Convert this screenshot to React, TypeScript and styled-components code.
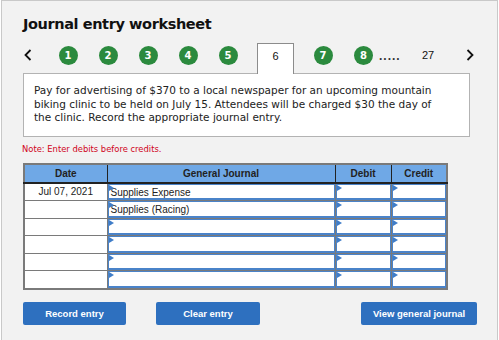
import styled, { createGlobalStyle } from "styled-components";

const GlobalStyle = createGlobalStyle`
  html, body {
    margin: 0;
    padding: 0;
    background: #ffffff;
  }
  body {
    font-family: "DejaVu Sans", Verdana, sans-serif;
  }
`;

const Frame = styled.div`
  margin-left: 1px;
  width: 497px;
  height: 340px;
  box-sizing: border-box;
  background: #f2f2f2;
  border: 1px solid #c9c9c9;
  border-bottom: none;
  padding: 12px 20px 0 21px;
`;

const Title = styled.h1`
  margin: 0;
  font-family: "DejaVu Sans", Verdana, sans-serif;
  font-size: 14.5px;
  font-weight: bold;
  letter-spacing: -0.4px;
  line-height: 22px;
  color: #111;
`;

const NavRow = styled.div`
  display: flex;
  align-items: center;
  height: 30px;
  margin-top: 8px;
  margin-left: -15px;
  padding-bottom: 6px;
  box-sizing: border-box;
`;

const Slot = styled.div<{ $w?: number; $end?: boolean }>`
  flex: 0 0 auto;
  width: ${(p) => p.$w ?? 40}px;
  display: flex;
  justify-content: ${(p) => (p.$end ? "flex-end" : "center")};
  align-items: center;
`;

const Chevron = styled.svg`
  display: block;
  width: 8px;
  height: 12px;
`;

const Step = styled.span`
  width: 19px;
  height: 19px;
  border-radius: 50%;
  background: #2b8a3e;
  color: #fff;
  font-family: "DejaVu Sans", Verdana, sans-serif;
  font-size: 10px;
  font-weight: bold;
  display: flex;
  align-items: center;
  justify-content: center;
`;

const Tab = styled.div`
  flex: 0 0 auto;
  align-self: stretch;
  margin: 0 9px -7px 9px;
  width: 37px;
  box-sizing: border-box;
  background: #fff;
  border: 1px solid #8c8c8c;
  border-bottom: none;
  position: relative;
  z-index: 1;
  display: flex;
  align-items: center;
  justify-content: center;
  padding-bottom: 6px;
  font-family: "Liberation Sans", Arial, sans-serif;
  font-size: 11px;
  color: #111;
`;

const Dots = styled.span`
  flex: 0 0 auto;
  width: 25px;
  font-family: "Liberation Sans", Arial, sans-serif;
  font-size: 12px;
  font-weight: bold;
  letter-spacing: 1px;
  color: #333;
  margin-left: 6px;
  line-height: 1;
  padding-top: 2px;
`;

const PageNum = styled.span`
  font-family: "Liberation Sans", Arial, sans-serif;
  font-size: 11px;
  color: #111;
`;

const Prompt = styled.div`
  width: 447px;
  box-sizing: border-box;
  background: #fff;
  border: 1px solid #b3b3b3;
  padding: 10px 10px 11px 10px;
  font-family: "DejaVu Sans", Verdana, sans-serif;
  font-size: 10.5px;
  line-height: 13.5px;
  color: #222;
`;

const Note = styled.div`
  margin-top: 6px;
  font-family: "DejaVu Sans", Verdana, sans-serif;
  font-size: 8.4px;
  line-height: 12px;
  color: #d0021b;
  margin-left: -1px;
`;

const Table = styled.table`
  margin-top: 8px;
  border-collapse: collapse;
  border: 2px solid #7a7a7a;
  table-layout: fixed;
  width: 423px;
  font-family: "Liberation Sans", Arial, sans-serif;
  font-size: 10px;
`;

const Th = styled.th`
  height: 17px;
  padding: 0;
  background: #6fa8e6;
  color: #222;
  font-weight: bold;
  border-left: 1px solid #222;
  border-bottom: 2px solid #222;
  &:first-child {
    border-left: none;
  }
`;

const DateCell = styled.td`
  padding: 0;
  background: #fff;
  border: 1px solid #7a7a7a;
  text-align: center;
  color: #222;
`;

const InputCell = styled.td`
  padding: 0;
  border: 1px solid #7a7a7a;
  background: #7a7a7a;
`;

const Field = styled.div`
  position: relative;
  height: 16.5px;
  box-sizing: border-box;
  background: #fff;
  border: 1.5px solid #4a83c9;
  border-top-width: 1px;
  border-bottom-width: 2px;
  padding: 1px 0 0 2px;
  color: #222;
  line-height: 13px;
  &::before {
    content: "";
    position: absolute;
    left: 0;
    top: 0;
    border-top: 3px solid transparent;
    border-bottom: 3px solid transparent;
    border-left: 5px solid #3f7dc8;
  }
`;

const Buttons = styled.div`
  display: flex;
  margin-top: 12px;
`;

const Button = styled.button<{ $w: number; $ml?: string }>`
  flex: 0 0 auto;
  width: ${(p) => p.$w}px;
  height: 23px;
  margin-left: ${(p) => p.$ml ?? "0"};
  border: none;
  border-radius: 2px;
  background: #2e70bf;
  color: #fff;
  font-family: "Liberation Sans", Arial, sans-serif;
  font-size: 9.5px;
  font-weight: bold;
  padding: 0;
`;

const rows = [
  { date: "Jul 07, 2021", account: "Supplies Expense" },
  { date: "", account: "Supplies (Racing)" },
  { date: "", account: "" },
  { date: "", account: "" },
  { date: "", account: "" },
  { date: "", account: "" },
];

const ChevronIcon = ({ dir }: { dir: "left" | "right" }) => (
  <Chevron viewBox="0 0 8 12">
    <polyline
      points={dir === "left" ? "6.5,1 1.5,6 6.5,11" : "1.5,1 6.5,6 1.5,11"}
      fill="none"
      stroke="#111"
      strokeWidth="1.8"
    />
  </Chevron>
);

export default function App() {
  return (
    <>
      <GlobalStyle />
      <Frame>
        <Title>Journal entry worksheet</Title>
        <NavRow>
          <Slot>
            <ChevronIcon dir="left" />
          </Slot>
          {[1, 2, 3, 4, 5].map((n) => (
            <Slot key={n}>
              <Step>{n}</Step>
            </Slot>
          ))}
          <Tab>6</Tab>
          <Slot>
            <Step>7</Step>
          </Slot>
          <Slot $w={30} $end>
            <Step>8</Step>
          </Slot>
          <Dots>.....</Dots>
          <Slot $w={48}>
            <PageNum>27</PageNum>
          </Slot>
          <Slot $w={36}>
            <ChevronIcon dir="right" />
          </Slot>
        </NavRow>
        <Prompt>
          Pay for advertising of $370 to a local newspaper for an upcoming mountain
          <br />
          biking clinic to be held on July 15. Attendees will be charged $30 the day of
          <br />
          the clinic. Record the appropriate journal entry.
        </Prompt>
        <Note>Note: Enter debits before credits.</Note>
        <Table>
          <colgroup>
            <col style={{ width: 83 }} />
            <col style={{ width: 228 }} />
            <col style={{ width: 56 }} />
            <col style={{ width: 56 }} />
          </colgroup>
          <thead>
            <tr>
              <Th>Date</Th>
              <Th>General Journal</Th>
              <Th>Debit</Th>
              <Th>Credit</Th>
            </tr>
          </thead>
          <tbody>
            {rows.map((r, i) => (
              <tr key={i}>
                <DateCell>{r.date}</DateCell>
                <InputCell>
                  <Field>{r.account}</Field>
                </InputCell>
                <InputCell>
                  <Field />
                </InputCell>
                <InputCell>
                  <Field />
                </InputCell>
              </tr>
            ))}
          </tbody>
        </Table>
        <Buttons>
          <Button $w={103}>Record entry</Button>
          <Button $w={104} $ml="30px">
            Clear entry
          </Button>
          <Button $w={116} $ml="auto">
            View general journal
          </Button>
        </Buttons>
      </Frame>
    </>
  );
}
